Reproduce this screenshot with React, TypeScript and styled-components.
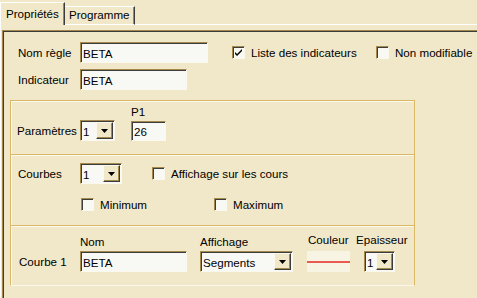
import React from "react";
import styled, { createGlobalStyle } from "styled-components";

const BG = "#F1E8CA";
const GOLD = "#DBB865";
const EDGE = "#A38A4C";
const DARK = "#3C3C3C";
const LIGHT = "#FBF8EE";
const FIELD = "#F8F8F5";

const GlobalStyle = createGlobalStyle`
  html, body {
    margin: 0;
    padding: 0;
    background: ${BG};
  }
  body {
    font-family: "Liberation Sans", Arial, sans-serif;
    font-size: 11.6px;
    color: #000;
  }
`;

const Window = styled.div`
  width: 477px;
  height: 298px;
  overflow: hidden;
  background: ${BG};
`;

const TabStrip = styled.div`
  display: flex;
  align-items: flex-end;
  height: 25px;
`;

const Tab = styled.div<{ $active?: boolean; $w: number }>`
  box-sizing: border-box;
  width: ${(p) => p.$w}px;
  height: ${(p) => (p.$active ? 23 : 19)}px;
  padding-left: ${(p) => (p.$active ? 5 : 4)}px;
  line-height: ${(p) => (p.$active ? 21 : 16)}px;
  border-top: 1px solid #fff;
  border-left: ${(p) => (p.$active ? "1px solid #fff" : "none")};
  border-right: 1px solid ${DARK};
  border-bottom: ${(p) => (p.$active ? "none" : "1px solid #fff")};
  box-shadow: inset -1px 0 0 #8d8a7c;
  white-space: nowrap;
`;

const TabFiller = styled.div`
  flex: 1;
  height: 1px;
  background: #fff;
`;

const TabPanel = styled.div`
  border-left: 1px solid #fff;
  padding: 5px 0 0 1px;
`;

const Frame = styled.div`
  border-top: 1px solid ${EDGE};
  border-left: 1px solid ${EDGE};
  box-shadow: inset 1px 1px 0 ${DARK};
  padding: 11px 0 0 7px;
  height: 280px;
`;

const TopSection = styled.div`
  padding-left: 8px;
  display: flex;
  flex-direction: column;
  gap: 6px;
  margin-bottom: 10px;
`;

const Row = styled.div<{ $h?: number; $mt?: number; $pl?: number }>`
  display: flex;
  align-items: center;
  height: ${(p) => p.$h ?? 21}px;
  margin-top: ${(p) => p.$mt ?? 0}px;
  padding-left: ${(p) => p.$pl ?? 0}px;
`;

const Label = styled.span<{ $w?: number }>`
  display: inline-block;
  width: ${(p) => (p.$w ? `${p.$w}px` : "auto")};
  white-space: nowrap;
`;

const Field = styled.input<{ $w: number; $h?: number }>`
  box-sizing: border-box;
  width: ${(p) => p.$w}px;
  height: ${(p) => p.$h ?? 21}px;
  margin: 0;
  padding: 1px 0 0 2px;
  border-style: solid;
  border-width: 1px;
  border-color: ${EDGE} ${LIGHT} ${LIGHT} ${EDGE};
  box-shadow: inset 1px 1px 0 ${DARK};
  background: ${FIELD};
  font: inherit;
  color: #000;
  outline: none;
`;

const CheckItem = styled.div<{ $w?: number; $ml?: number }>`
  display: flex;
  align-items: center;
  gap: 6px;
  width: ${(p) => (p.$w ? `${p.$w}px` : "auto")};
  margin-left: ${(p) => p.$ml ?? 0}px;
  white-space: nowrap;
`;

const Box = styled.span`
  box-sizing: border-box;
  width: 13px;
  height: 13px;
  flex: none;
  display: flex;
  align-items: center;
  justify-content: center;
  border-style: solid;
  border-width: 1px;
  border-color: ${EDGE} ${LIGHT} ${LIGHT} ${EDGE};
  box-shadow: inset 1px 1px 0 ${DARK};
  background: ${FIELD};
`;

const Check: React.FC<{ label: string; checked?: boolean; w?: number; ml?: number }> = ({
  label,
  checked,
  w,
  ml,
}) => (
  <CheckItem $w={w} $ml={ml}>
    <Box>
      {checked && (
        <svg width="9" height="9" viewBox="0 0 9 9">
          <path d="M1 4 L3 6 L8 1 L8 3 L3 8 L1 6 Z" fill="#000" />
        </svg>
      )}
    </Box>
    <span>{label}</span>
  </CheckItem>
);

const SelectBox = styled.div<{ $w: number; $ml?: number; $h?: number }>`
  box-sizing: border-box;
  width: ${(p) => p.$w}px;
  height: ${(p) => p.$h ?? 21}px;
  margin-left: ${(p) => p.$ml ?? 0}px;
  display: flex;
  align-items: center;
  border-style: solid;
  border-width: 1px;
  border-color: ${EDGE} ${LIGHT} ${LIGHT} ${EDGE};
  box-shadow: inset 1px 1px 0 ${DARK};
  background: ${FIELD};
  padding: 1px 1px 1px 2px;
`;

const SelectValue = styled.span`
  flex: 1;
  overflow: hidden;
  white-space: nowrap;
  padding-top: 1px;
`;

const DropButton = styled.span`
  box-sizing: border-box;
  width: 17px;
  height: 100%;
  flex: none;
  display: flex;
  align-items: center;
  justify-content: center;
  background: ${BG};
  border-style: solid;
  border-width: 1px;
  border-color: ${LIGHT} ${DARK} ${DARK} ${LIGHT};
  box-shadow: inset -1px -1px 0 ${EDGE};
`;

const Select: React.FC<{ value: string; w: number; ml?: number }> = ({ value, w, ml }) => (
  <SelectBox $w={w} $ml={ml}>
    <SelectValue>{value}</SelectValue>
    <DropButton>
      <svg width="7" height="4" viewBox="0 0 7 4">
        <path d="M0 0 H7 L3.5 4 Z" fill="#000" />
      </svg>
    </DropButton>
  </SelectBox>
);

const Group = styled.div`
  width: 405px;
  box-sizing: border-box;
  border: 1px solid ${GOLD};
  border-bottom-color: ${LIGHT};
  box-shadow: inset 1px 1px 0 ${LIGHT};
`;

const Section = styled.div<{ $pt: number; $pb: number; $pl: number }>`
  padding: ${(p) => `${p.$pt}px 0 ${p.$pb}px ${p.$pl}px`};
  & + & {
    border-top: 1px solid ${GOLD};
    box-shadow: inset 0 1px 0 ${LIGHT};
  }
`;

const ColumnsRow = styled.div`
  display: flex;
  align-items: flex-end;
`;

const Column = styled.div<{ $w?: number; $ml?: number }>`
  display: flex;
  flex-direction: column;
  align-items: flex-start;
  width: ${(p) => (p.$w ? `${p.$w}px` : "auto")};
  margin-left: ${(p) => p.$ml ?? 0}px;
`;

const ColLabel = styled.span<{ $lift?: number; $ml?: number }>`
  line-height: 14px;
  margin-top: ${(p) => -(p.$lift ?? 0)}px;
  margin-bottom: ${(p) => 2 + (p.$lift ?? 0)}px;
  margin-left: ${(p) => p.$ml ?? 0}px;
  white-space: nowrap;
`;

const RowLabel = styled.span<{ $w: number }>`
  width: ${(p) => p.$w}px;
  line-height: 21px;
  height: 21px;
  white-space: nowrap;
`;

const Swatch = styled.div`
  width: 43px;
  height: 21px;
  background: #f7f4e3;
  display: flex;
  align-items: center;
`;

const ColorLine = styled.div<{ $color: string }>`
  width: 100%;
  height: 2px;
  background: ${(p) => p.$color};
`;

const App: React.FC = () => {
  return (
    <Window>
      <GlobalStyle />
      <TabStrip>
        <Tab $active $w={65}>Propriétés</Tab>
        <Tab $w={70}>Programme</Tab>
        <TabFiller />
      </TabStrip>
      <TabPanel>
        <Frame>
          <TopSection>
            <Row>
              <Label $w={62}>Nom règle</Label>
              <Field $w={128} defaultValue="BETA" />
              <Check label="Liste des indicateurs" checked w={144} ml={24} />
              <Check label="Non modifiable" />
            </Row>
            <Row>
              <Label $w={62}>Indicateur</Label>
              <Field $w={107} defaultValue="BETA" />
            </Row>
          </TopSection>

          <Group>
            <Section $pt={4} $pb={13} $pl={6}>
              <ColumnsRow>
                <RowLabel $w={63}>Paramètres</RowLabel>
                <Select value="1" w={35} />
                <Column $ml={16}>
                  <ColLabel>P1</ColLabel>
                  <Field $w={35} $h={20} defaultValue="26" />
                </Column>
              </ColumnsRow>
            </Section>

            <Section $pt={8} $pb={14} $pl={7}>
              <Row>
                <Label $w={62}>Courbes</Label>
                <Select value="1" w={42} />
                <Check label="Affichage sur les cours" ml={30} />
              </Row>
              <Row $h={13} $mt={14} $pl={63}>
                <Check label="Minimum" w={133} />
                <Check label="Maximum" />
              </Row>
            </Section>

            <Section $pt={9} $pb={13} $pl={8}>
              <ColumnsRow>
                <RowLabel $w={61}>Courbe 1</RowLabel>
                <Column $w={120}>
                  <ColLabel>Nom</ColLabel>
                  <Field $w={107} defaultValue="BETA" />
                </Column>
                <Column $w={107}>
                  <ColLabel>Affichage</ColLabel>
                  <Select value="Segments" w={93} />
                </Column>
                <Column $w={49}>
                  <ColLabel $lift={2} $ml={1}>Couleur</ColLabel>
                  <Swatch>
                    <ColorLine $color="#E85A52" />
                  </Swatch>
                </Column>
                <Column>
                  <ColLabel $lift={2}>Epaisseur</ColLabel>
                  <Select value="1" w={31} ml={8} />
                </Column>
              </ColumnsRow>
            </Section>
          </Group>
        </Frame>
      </TabPanel>
    </Window>
  );
};

export default App;
